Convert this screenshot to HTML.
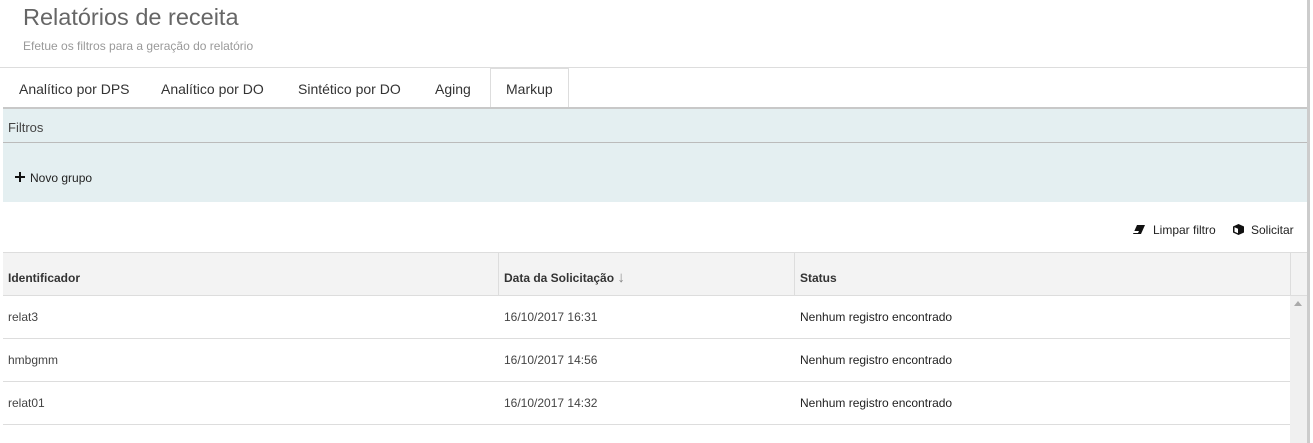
<!DOCTYPE html>
<html><head><meta charset="utf-8"><style>
*{box-sizing:border-box;margin:0;padding:0}
body{width:1313px;height:443px;overflow:hidden;background:#fff;font-family:"Liberation Sans",sans-serif;position:relative;color:#333}
.abs{position:absolute;white-space:nowrap}
</style></head><body>
<div class="abs" style="left:23px;top:4px;font-size:23.5px;color:#666">Relatórios de receita</div>
<div class="abs" style="left:23px;top:39px;font-size:12px;color:#999">Efetue os filtros para a geração do relatório</div>
<div class="abs" style="left:0;top:67px;width:1307px;height:1px;background:#ddd"></div>
<div class="abs" style="left:1307px;top:0;width:3px;height:443px;background:#ccc"></div>
<div class="abs" style="left:490px;top:68px;width:79px;height:40px;border:1px solid #ddd;border-bottom:none;background:#fff"></div>
<div class="abs" style="left:19px;top:81px;font-size:14px">Analítico por DPS</div>
<div class="abs" style="left:161px;top:81px;font-size:14px">Analítico por DO</div>
<div class="abs" style="left:298px;top:81px;font-size:14px">Sintético por DO</div>
<div class="abs" style="left:435px;top:81px;font-size:14px">Aging</div>
<div class="abs" style="left:506px;top:81px;font-size:14px">Markup</div>
<div class="abs" style="left:3px;top:107px;width:1304px;height:95px;background:#e4eff1;border-top:2px solid #c8c8c8"></div>
<div class="abs" style="left:3px;top:142px;width:1304px;height:1px;background:#bbb"></div>
<div class="abs" style="left:8px;top:120px;font-size:13px;color:#444">Filtros</div>
<svg class="abs" style="left:15px;top:172px" width="10" height="10"><path d="M4 0h2v4h4v2H6v4H4V6H0V4h4z" fill="#111"/></svg>
<div class="abs" style="left:30px;top:171px;font-size:12px;color:#222">Novo grupo</div>
<svg class="abs" style="left:1133px;top:225px" width="12" height="9"><path d="M4 0h8L8 9H0z" fill="#111"/><path d="M1 6h5l-1 2H0z" fill="#fff"/></svg>
<div class="abs" style="left:1153px;top:223px;font-size:12px;color:#222">Limpar filtro</div>
<svg class="abs" style="left:1233px;top:224px" width="11" height="11"><path d="M5.5 0L11 2.5v6L5.5 11 0 8.5v-6z" fill="#111"/><path d="M1.5 3.2L5 4.8v4.5L1.5 7.7z" fill="#fff"/></svg>
<div class="abs" style="left:1251px;top:223px;font-size:12px;color:#222">Solicitar</div>
<div class="abs" style="left:3px;top:252px;width:1304px;height:44px;background:#f3f3f3;border-top:1px solid #ddd;border-bottom:1px solid #ddd"></div>
<div class="abs" style="left:498px;top:252px;width:1px;height:44px;background:#ddd"></div>
<div class="abs" style="left:794px;top:252px;width:1px;height:44px;background:#ddd"></div>
<div class="abs" style="left:1290px;top:252px;width:1px;height:44px;background:#ddd"></div>
<div class="abs" style="left:1290px;top:296px;width:17px;height:147px;background:#f0f0f0"></div>
<svg class="abs" style="left:1294px;top:301px" width="8" height="5"><path d="M4 0L8 5H0z" fill="#aaa"/></svg>
<div class="abs" style="left:8px;top:271px;font-size:12px;font-weight:bold">Identificador</div>
<div class="abs" style="left:504px;top:271px;font-size:12px;font-weight:bold">Data da Solicitação <span style="font-weight:normal;color:#888;font-size:15px;line-height:12px">↓</span></div>
<div class="abs" style="left:800px;top:271px;font-size:12px;font-weight:bold">Status</div>
<div class="abs" style="left:3px;top:338px;width:1287px;height:1px;background:#ddd"></div>
<div class="abs" style="left:3px;top:381px;width:1287px;height:1px;background:#ddd"></div>
<div class="abs" style="left:3px;top:424px;width:1287px;height:1px;background:#ddd"></div>
<div class="abs" style="left:8px;top:310px;font-size:12px;color:#444">relat3</div>
<div class="abs" style="left:504px;top:310px;font-size:12px;color:#444">16/10/2017 16:31</div>
<div class="abs" style="left:800px;top:310px;font-size:12px;color:#222">Nenhum registro encontrado</div>
<div class="abs" style="left:8px;top:353px;font-size:12px;color:#444">hmbgmm</div>
<div class="abs" style="left:504px;top:353px;font-size:12px;color:#444">16/10/2017 14:56</div>
<div class="abs" style="left:800px;top:353px;font-size:12px;color:#222">Nenhum registro encontrado</div>
<div class="abs" style="left:8px;top:396px;font-size:12px;color:#444">relat01</div>
<div class="abs" style="left:504px;top:396px;font-size:12px;color:#444">16/10/2017 14:32</div>
<div class="abs" style="left:800px;top:396px;font-size:12px;color:#222">Nenhum registro encontrado</div>
</body></html>
